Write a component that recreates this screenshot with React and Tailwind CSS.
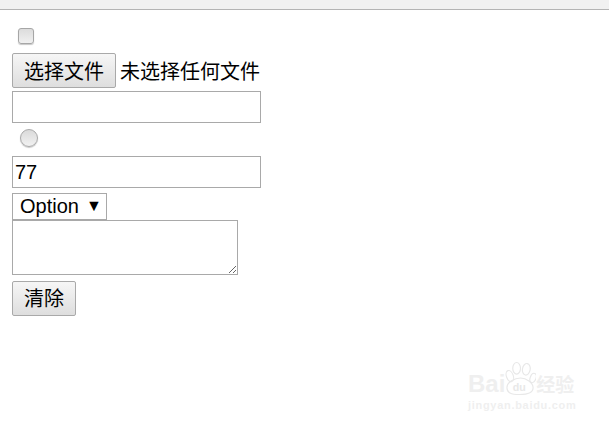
import React from 'react';

const sans = "font-['Liberation_Sans','Noto_Sans_CJK_SC',sans-serif]";
const btn = 'flex items-center justify-center border border-[#a9a9a9] rounded-[2px] bg-gradient-to-b from-[#f6f6f6] to-[#dedede] text-[20px] text-black leading-none';

function Watermark() {
  return (
    <div className="absolute left-[468px] top-[359px] w-[120px] text-[#efefef]">
      <div className="flex items-end h-[38px]">
        <span className="text-[24px] font-bold leading-[26px] font-['Liberation_Sans',sans-serif]">Bai</span>
        <svg width="31" height="38" viewBox="0 0 32 36" fill="none" stroke="#e8e8e8" strokeWidth="1.2">
          <ellipse cx="5" cy="16" rx="3.5" ry="6" transform="rotate(-20 5 16)" />
          <ellipse cx="12" cy="8" rx="4" ry="6" />
          <ellipse cx="22" cy="9" rx="4" ry="6" transform="rotate(10 22 9)" />
          <ellipse cx="29" cy="18" rx="3" ry="5" transform="rotate(20 29 18)" />
          <path d="M2 28c0-6 8-10 14-10s13 5 13 10-5 7-14 7S2 33 2 28z" />
          <text x="8" y="31" fontSize="11" fontFamily="Liberation Sans" fill="#e8e8e8" stroke="none" fontWeight="bold">du</text>
        </svg>
        <span className="text-[19px] font-bold leading-[26px] font-['Noto_Sans_CJK_SC',sans-serif]">经验</span>
      </div>
      <div className="text-[11px] font-bold leading-[14px] mt-[1px] font-['Liberation_Sans',sans-serif] whitespace-nowrap tracking-[0.7px]">jingyan.baidu.com</div>
    </div>
  );
}

export default function App() {
  return (
    <div className={`relative w-[609px] h-[427px] overflow-hidden bg-white ${sans}`}>
      <div className="h-[10px] bg-[#f1f1f1] border-b border-[#b4b4b4]" />
      <form className="flex flex-col items-start pl-[12px]">
        <input
          type="checkbox"
          className="appearance-none block w-[16px] h-[16px] mt-[18px] ml-[6px] rounded-[3px] border border-[#a6a6a6] bg-gradient-to-b from-[#dcdcdc] to-[#f0f0f0] shadow-[0_1px_1px_#c8c8c8]"
        />
        <div className="flex items-center mt-[9px] text-[20px] text-black">
          <button type="button" className={`${btn} w-[104px] h-[35px] pt-[2px]`}>选择文件</button>
          <span className="ml-[4px] pt-[3px] leading-none">未选择任何文件</span>
        </div>
        <input type="text" className="block w-[249px] h-[32px] mt-[3px] border border-[#a9a9a9] bg-white" />
        <input
          type="radio"
          className="appearance-none block w-[18px] h-[18px] mt-[6px] ml-[8px] rounded-full border border-[#a9a9a9] bg-gradient-to-b from-[#dadada] to-[#f2f2f2] shadow-[0_1px_1px_#c8c8c8]"
        />
        <input
          type="text"
          defaultValue="77"
          className="block w-[249px] h-[32px] mt-[9px] px-[2px] border border-[#a9a9a9] bg-white text-[20px] text-black outline-none"
        />
        <div className="flex items-center w-[95px] h-[27px] mt-[5px] pl-[7px] pb-[2px] border border-[#a9a9a9] bg-white text-[20px] text-black leading-none">
          <span>Option</span>
          <span className="ml-[7px] text-[16px]">▼</span>
        </div>
        <textarea className="block w-[226px] h-[55px] border border-[#a9a9a9] bg-white outline-none" />
        <button type="button" className={`${btn} w-[64px] h-[35px] mt-[6px] pt-[1px]`}>清除</button>
      </form>
      <Watermark />
    </div>
  );
}
